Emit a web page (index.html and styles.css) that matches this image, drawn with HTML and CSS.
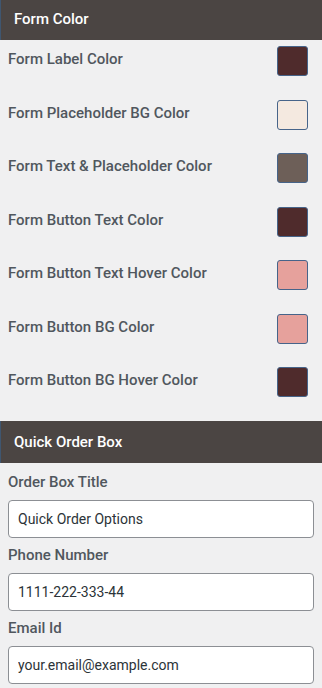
FILE: index.html
```html
<!DOCTYPE html>
<html lang="en">
<head>
    <meta charset="UTF-8">
    <title>Form Settings</title>
    <meta name="viewport" content="width=device-width, initial-scale=1.0">
    <link rel="stylesheet" href="styles.css">
</head>
<body>
    <div class="panel">
        <div class="section-head">Form Color</div>
        <div class="color-list">
            <div class="color-row"><span class="row-label">Form Label Color</span><span class="swatch" style="background:#4f2b2c"></span></div>
            <div class="color-row"><span class="row-label">Form Placeholder BG Color</span><span class="swatch" style="background:#f4e9e0"></span></div>
            <div class="color-row"><span class="row-label">Form Text &amp; Placeholder Color</span><span class="swatch" style="background:#6d5f58"></span></div>
            <div class="color-row"><span class="row-label">Form Button Text Color</span><span class="swatch" style="background:#4f2b2c"></span></div>
            <div class="color-row"><span class="row-label">Form Button Text Hover Color</span><span class="swatch" style="background:#e6a19c"></span></div>
            <div class="color-row"><span class="row-label">Form Button BG Color</span><span class="swatch" style="background:#e6a19c"></span></div>
            <div class="color-row"><span class="row-label">Form Button BG Hover Color</span><span class="swatch" style="background:#4f2b2c"></span></div>
        </div>

        <div class="section-head">Quick Order Box</div>
        <div class="field-list">
            <div class="field">
                <label class="field-label" for="box-title">Order Box Title</label>
                <input class="field-input" id="box-title" type="text" value="Quick Order Options">
            </div>
            <div class="field">
                <label class="field-label" for="phone">Phone Number</label>
                <input class="field-input" id="phone" type="text" value="1111-222-333-44">
            </div>
            <div class="field">
                <label class="field-label" for="email">Email Id</label>
                <input class="field-input" id="email" type="text" value="your.email@example.com">
            </div>
        </div>
    </div>
</body>
</html>
```

FILE: styles.css
```css
body, html {
    margin: 0; padding: 0; background: #f0f0f1; color: #50575e;
    font-family: Roboto, 'Liberation Sans', sans-serif;
}
.panel { margin-top: -2px; overflow: hidden; }
.section-head {
    height: 42px; display: flex; align-items: center; padding: 0 13px;
    background: #4b4543; color: #fff; font-size: 15px; font-weight: 500;
    border-left: 1px solid #3f5670; box-sizing: border-box;
}
.color-list { padding-bottom: 6.5px; }
.color-row {
    height: 53.5px; display: flex; justify-content: space-between; align-items: flex-start;
    padding: 6px 14px 0 8px; box-sizing: border-box;
}
.row-label { font-size: 15px; font-weight: 500; line-height: 18px; margin-top: 4px; }
.swatch {
    width: 31px; height: 30px; box-sizing: border-box; border-radius: 3px;
    border: 1.5px solid #46648a;
}
.field-list { padding: 8.5px 8px 0; }
.field { display: flex; flex-direction: column; margin-bottom: 7px; }
.field-label { font-size: 15px; font-weight: 500; line-height: 20px; margin-bottom: 8px; }
.field-input {
    height: 38px; box-sizing: border-box; width: 100%; padding: 0 9px;
    border: 1px solid #8c8f94; border-radius: 4px; background: #fff;
    font-family: Roboto, 'Liberation Sans', sans-serif; font-size: 14px; color: #2c3338;
}
```
